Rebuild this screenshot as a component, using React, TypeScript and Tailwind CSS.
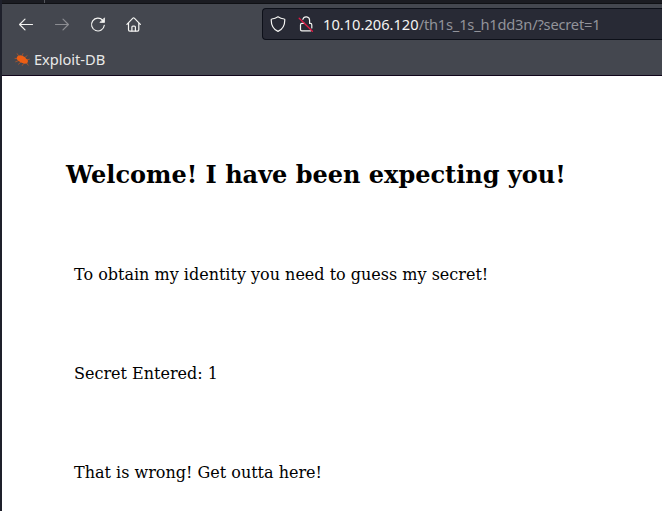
import React from "react";

const iconProps = {
  width: 16,
  height: 16,
  viewBox: "0 0 16 16",
  fill: "none",
  stroke: "#f4f4f2",
  strokeWidth: 1.2,
  strokeLinecap: "round" as const,
  strokeLinejoin: "round" as const,
};

function BackIcon() {
  return (
    <svg {...iconProps}>
      <path d="M14.5 7.5H1.7M7 2.1 1.6 7.5 7 12.9" />
    </svg>
  );
}

function ForwardIcon() {
  return (
    <svg {...iconProps} stroke="#8c8d92">
      <path d="M1.5 7.5h12.8M9 2.1 14.4 7.5 9 12.9" />
    </svg>
  );
}

function ReloadIcon() {
  return (
    <svg {...iconProps}>
      <path d="M12.8 3.4A6.4 6.4 0 1 0 14.3 8.3" />
      <path d="M14.5 1.2v4.2h-4.2z" fill="#f4f4f2" strokeWidth="0.8" />
    </svg>
  );
}

function HomeIcon() {
  return (
    <svg {...iconProps}>
      <path d="M.9 7.3 6.9 1.1q.7-.6 1.4 0l6.1 6.2M2.5 6v6.8q0 1.3 1.3 1.3h7.7q1.3 0 1.3-1.3V6" />
      <path d="M5.9 13.9v-3.8q0-1 1-1h1.5q1 0 1 1v3.8" />
    </svg>
  );
}

function ShieldIcon() {
  return (
    <svg {...iconProps}>
      <path d="M8 .8c2 1.4 4 2 6.2 2.2q.6 0 .6.8c0 5.3-1.8 9.5-6.8 11.6C3 13.3 1.2 9.1 1.2 3.8q0-.8.6-.8C4 2.8 6 2.2 8 .8z" />
    </svg>
  );
}

function InsecureIcon() {
  return (
    <svg {...iconProps}>
      <path d="M4.9 3.4a3.4 3.4 0 0 1 6.7.8V7.4h.9q1.3 0 1.3 1.5v3M6.5 7.4H3.9q-1.4 0-1.4 1.5v4.7q0 1.3 1.3 1.3h8.8" />
      <path d="M1.2 2.3 14.4 15.3" stroke="#e21a45" strokeWidth="1.3" />
    </svg>
  );
}

function BugIcon() {
  return (
    <svg width="16" height="16" viewBox="0 0 16 16" fill="#ec5e14" stroke="#ec5e14">
      <path
        d="M3.2 5.6 4.7 4.8 6 4.2l2.4.5 2.4 1.3 1.4 1.8 1.4 1 .4 1.5-.8 1.9-2.5.6-3.1-1-2.2-1.4-2-1.5-.8-1.6z"
        stroke="none"
      />
      <path
        d="M5 5.4 3 2.4M8 4.8l1.2-2.6M10.8 6.5l2.6-2M12.8 9l3-.9M4 7.8.6 7.3M5 9.5l-3.7 1.4M7 11l-2.8 2.4M9.7 12.4l-1.6 2.4M12.6 12l1.8 2.5"
        fill="none"
        strokeWidth=".9"
        opacity=".6"
      />
    </svg>
  );
}

function Toolbar() {
  return (
    <div className="flex h-[41px] items-start">
      <div className="flex w-[260px] gap-5 pt-[13px] pl-4">
        <BackIcon />
        <ForwardIcon />
        <ReloadIcon />
        <HomeIcon />
      </div>
      <div className="mt-1 flex h-8 flex-1 items-center rounded-l border border-r-0 border-[#0d1019] bg-[#282a35] pl-[7px]">
        <ShieldIcon />
        <span className="ml-3">
          <InsecureIcon />
        </span>
        <span className="ml-[9px] text-[14.67px] leading-5 whitespace-nowrap text-[#92939a]">
          <span className="text-[#f4f4f2]">10.10.206.120</span>
          <span className="tracking-[-0.2px]">/th1s_1s_h1dd3n/?secret=1</span>
        </span>
      </div>
    </div>
  );
}

export default function App() {
  return (
    <div className="flex h-[511px] w-[662px] flex-col overflow-hidden border-l-2 border-[#1e202b] bg-white">
      <header className="h-[76px] shrink-0 border-b border-[#10051a] bg-[#44474f] font-['Noto_Sans',sans-serif]">
        <div className="h-1 border-b border-[#101115] bg-[#1b1c22]">
          <div className="ml-[42px] h-[3px] w-px bg-[#55575d]" />
        </div>
        <Toolbar />
        <div className="flex h-7 items-center gap-1 pl-3 text-[14.67px] leading-5 text-[#e9e9e8]">
          <BugIcon />
          <span className="tracking-[-0.04px]">Exploit-DB</span>
        </div>
      </header>
      <main className="pt-[85px] pl-16 font-['DejaVu_Serif',serif] text-black">
        <h1 className="text-2xl leading-7 font-bold">Welcome! I have been expecting you!</h1>
        <div className="flex flex-col gap-20 pt-[76px] pl-2 text-base leading-[19px]">
          <p>To obtain my identity you need to guess my secret!</p>
          <p>Secret Entered: 1</p>
          <p>That is wrong! Get outta here!</p>
        </div>
      </main>
    </div>
  );
}
